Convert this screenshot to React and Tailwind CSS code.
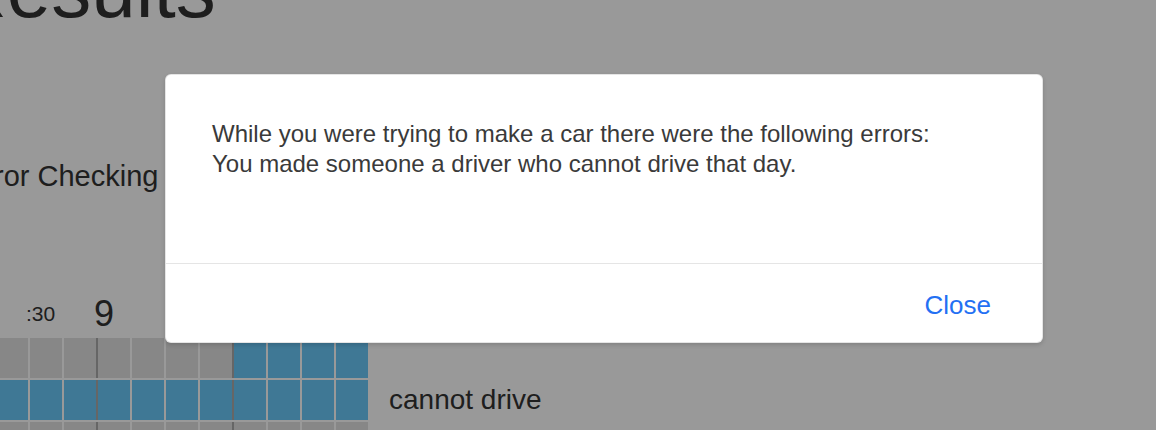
const cols = 11;
const hourLines = [3, 7]; // cells that start a new hour get a darker left line

function GridRow({ blueFrom = 99 }) {
  return (
    <div className="flex">
      {Array.from({ length: cols }).map((_, i) => (
        <div
          key={i}
          className={`h-[40px] w-[34px] border-l-2 ${hourLines.includes(i) ? 'border-[#aaaaaa]' : 'border-white'} ${i >= blueFrom ? 'bg-[#69c8f8]' : 'bg-[#e2e2e2]'}`}
        />
      ))}
    </div>
  );
}

export default function App() {
  return (
    <div className="relative w-[1156px] h-[430px] overflow-hidden bg-white font-['Liberation_Sans',sans-serif] text-[#333]">
      {/* page behind the modal */}
      <div className="flex flex-col">
        <h1 className="-mt-[50px] -ml-[51px] h-[80px] text-[80px] leading-[80px] font-medium">Results</h1>
        <p className="mt-[130px] -ml-[35px] text-[29px] leading-[32px]">Error Checking</p>
        <div className="mt-[104px] flex h-[36px] items-center">
          <span className="ml-[26px] w-[68px] text-[21px] leading-[24px]">:30</span>
          <span className="w-[72px] text-[36px] leading-[36px]">9</span>
          <span className="w-[64px] text-[21px] leading-[24px]">:30</span>
          <span className="text-[36px] leading-[36px]">10</span>
        </div>
        <div className="mt-[6px] -ml-[6px] flex flex-col gap-[2px]">
          <div className="flex items-center">
            <GridRow blueFrom={7} />
          </div>
          <div className="flex items-center">
            <GridRow blueFrom={0} />
            <span className="ml-[21px] text-[28px] leading-[32px]">cannot drive</span>
          </div>
          <div className="flex items-center">
            <GridRow />
          </div>
        </div>
      </div>

      {/* backdrop */}
      <div className="absolute inset-0 bg-black/40" />

      {/* modal */}
      <div className="absolute left-[165px] top-[74px] w-[878px] rounded-[6px] border border-black/10 bg-white shadow-[0_2px_4px_rgba(0,0,0,0.15)]">
        <div className="h-[188px] px-[46px] pt-[44px] text-[24px] leading-[30px] text-[#3a3a3a]">
          <p>While you were trying to make a car there were the following errors:</p>
          <p>You made someone a driver who cannot drive that day.</p>
        </div>
        <div className="flex h-[79px] items-center justify-end border-t border-[#e5e5e5] pr-[51px] pt-[4px]">
          <button className="text-[26px] leading-[30px] text-[#2370f3]">Close</button>
        </div>
      </div>
    </div>
  );
}
